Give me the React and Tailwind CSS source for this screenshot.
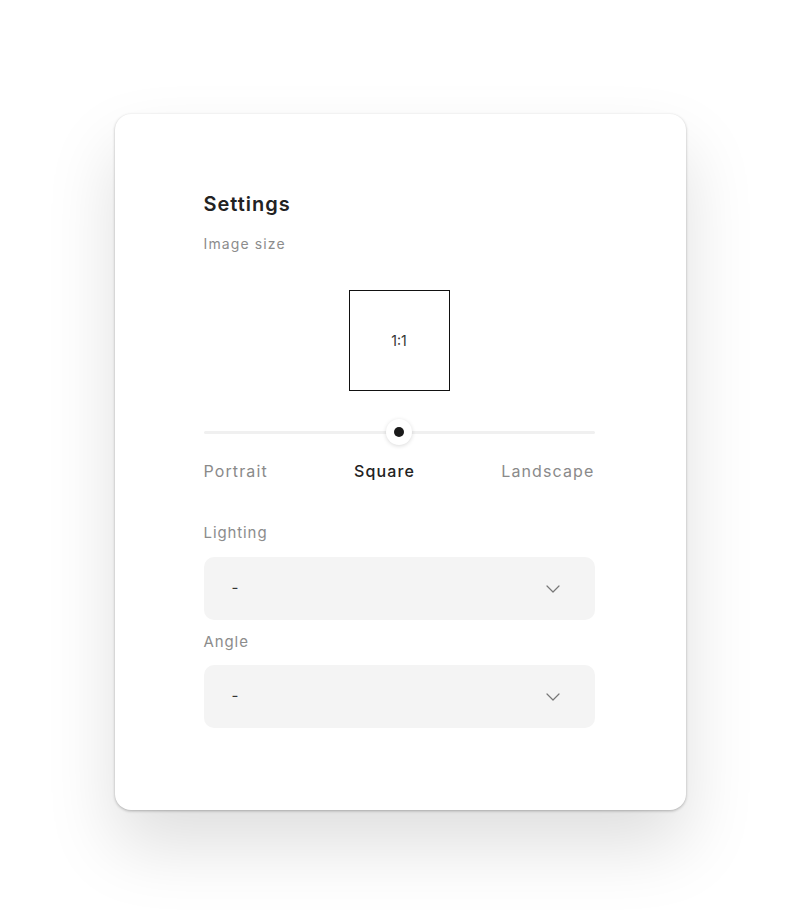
import { ChevronDown } from "lucide-react"

function SelectBox() {
    return (
        <div className="flex items-center justify-between h-[63px] rounded-[10px] bg-[#f4f4f4] pl-[28px] pr-[30px]">
            <span className="text-[15px] text-[#333]">-</span>
            <ChevronDown className="w-[24px] h-[24px] text-[#777]" strokeWidth={1.2} />
        </div>
    )
}

export default function App() {
    return (
        <div className="min-h-screen bg-white pt-[114px] pb-[114px]" style={{ fontFamily: "Inter, 'Noto Sans', sans-serif" }}>
            <div className="mx-auto w-[571px] rounded-[16px] bg-white pl-[89px] pr-[91px] pt-[76px] pb-[82px] shadow-[0_1px_3px_rgba(0,0,0,0.28),0_36px_70px_rgba(0,0,0,0.13)]">

                {/* HEADER */}
                <h1 className="text-[20px] leading-[28px] font-semibold text-[#222] tracking-[0.05em]">Settings</h1>
                <p className="mt-[16px] text-[14px] leading-[20px] text-[#8c8c8c] tracking-[0.08em]">Image size</p>

                {/* PREVIEW */}
                <div className="mt-[36px] flex justify-center">
                    <div className="w-[101px] h-[101px] border border-[#111] flex items-center justify-center text-[14px] text-[#333]">
                        1:1
                    </div>
                </div>

                {/* SLIDER */}
                <div className="relative mt-[28px] h-[26px] flex items-center">
                    <div className="w-full h-[3px] rounded-full bg-[#f0f0f0]"></div>
                    <div className="absolute left-1/2 top-0 -translate-x-1/2 w-[26px] h-[26px] rounded-full bg-white shadow-[0_1px_4px_rgba(0,0,0,0.15)] flex items-center justify-center">
                        <div className="w-[10px] h-[10px] rounded-full bg-[#1a1a1a]"></div>
                    </div>
                </div>

                <div className="mt-[14px] flex justify-between text-[16px] leading-[24px] tracking-[0.07em]">
                    <span className="text-[#8a8a8a]">Portrait</span>
                    <span className="text-[#222] font-medium">Square</span>
                    <span className="text-[#8a8a8a]">Landscape</span>
                </div>

                {/* LIGHTING */}
                <p className="mt-[40px] text-[15px] leading-[20px] text-[#8c8c8c] tracking-[0.06em]">Lighting</p>
                <div className="mt-[14px]">
                    <SelectBox />
                </div>

                {/* ANGLE */}
                <p className="mt-[12px] text-[15px] leading-[20px] text-[#8c8c8c] tracking-[0.06em]">Angle</p>
                <div className="mt-[13px]">
                    <SelectBox />
                </div>
            </div>
        </div>
    )
}
